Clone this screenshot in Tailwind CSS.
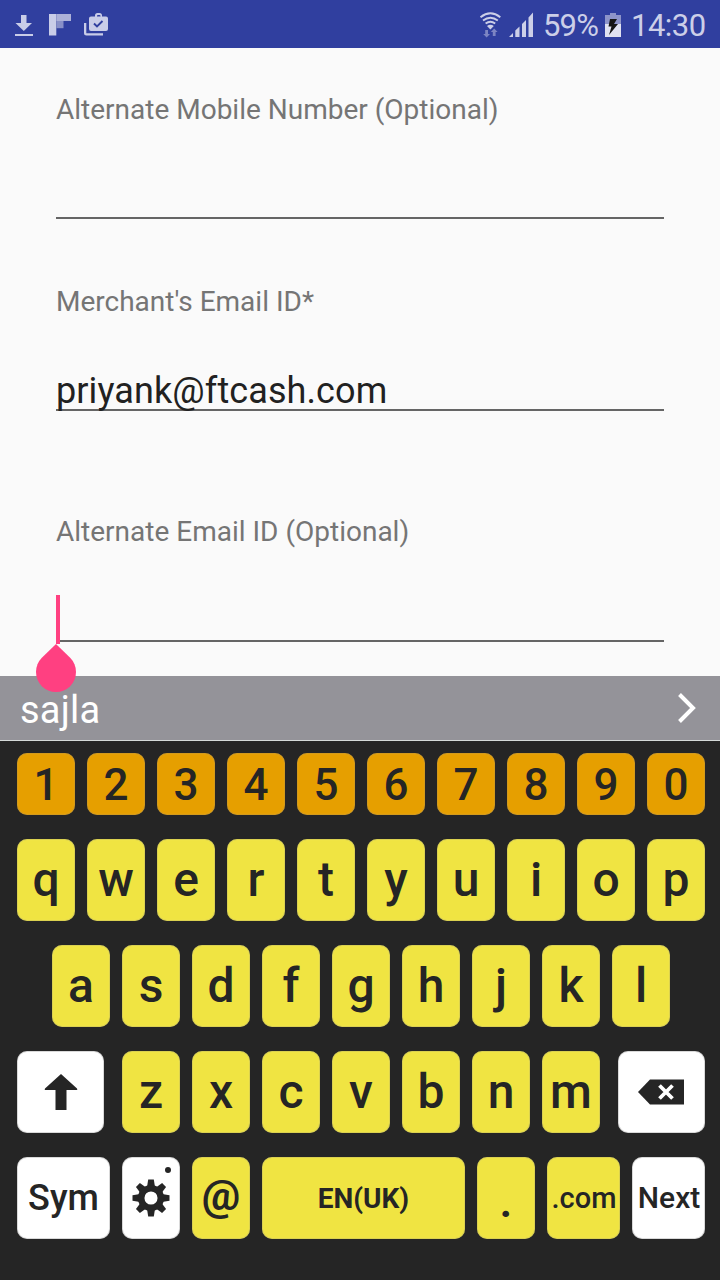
<!DOCTYPE html>
<html lang="en">
<head>
<meta charset="utf-8">
<title>Merchant details</title>
<script src="https://cdn.jsdelivr.net/npm/@tailwindcss/browser@4"></script>
</head>
<body class="w-[720px] h-[1280px] overflow-hidden bg-[#fafafa] font-['Roboto',sans-serif] flex flex-col">
<header class="h-12 shrink-0 bg-[#303f9f] flex items-center text-[#cccfe8]">
  <svg class="w-[120px] h-12" viewBox="0 0 120 48" fill="#c9cde8">
    <path d="M21 15h5.500v8h5.500l-8.200 8-8.300-8H21zM15 34h18v2H15z"/>
    <path d="M49 14h7.300v21.500H49z"/><path d="M56.300 14H71v7H56.300z" fill="#acb1d8"/><path d="M56.300 21h7.200v7.200h-7.200z" fill="#8890c8"/>
    <path d="M84 23h2.300v10.300H103v2.200H86.500a2.500 2.500 0 0 1-2.500-2.500z"/>
    <path fill-rule="evenodd" d="M91 16.500h4V15.500a2.500 2.500 0 0 1 2.500-2.500h2a2.500 2.500 0 0 1 2.500 2.500v1h4a2 2 0 0 1 2 2V29a2 2 0 0 1-2 2H91a2 2 0 0 1-2-2v-10.500a2 2 0 0 1 2-2zm6 0h3.500v-.500a1 1 0 0 0-1-1h-1.500a1 1 0 0 0-1 1z"/>
    <path d="m94 23.500 3 3 5.500-5.500" fill="none" stroke="#303f9f" stroke-width="1.900"/>
  </svg>
  <svg class="ml-[356px] w-[60px] h-12" viewBox="476 0 60 48" fill="#cccfe8">
    <g fill="none" stroke="#cccfe8" stroke-width="1.900"><path d="M480.500 17.200q9.900-7.800 19.800 0"/><path d="M483 20.500q7.400-5.600 14.800 0"/><path d="M485.600 23.500q4.800-3.600 9.600 0"/></g>
    <path d="M487 26q3.400-2.400 6.800 0l-3.400 3.500z"/>
    <path fill="#7d85c3" d="M485.200 30h2.800v4h2l-3.400 3.500-3.400-3.500h2zM492.800 36v-4h-2l3.400-3.500 3.400 3.500h-2v4z"/>
    <path d="M509 37l4-4v4zM515.300 30.500l4.200-4V37h-4.200zM522 24l4-4v17h-4zM528.500 17.500l4.500-5V37h-4.500z"/>
  </svg>
  <span class="ml-[7px] w-[56px] text-[31px] leading-8 tracking-[-0.8px] whitespace-nowrap mt-[3px]">59%</span>
  <svg class="ml-[5px] w-[18px] h-12" viewBox="604 0 18 48"><path fill="#8d94c9" d="M605 15h5v-2h6v2h5v9h-16z"/><path fill="#e0e2f1" d="M605 24h16v13h-16z"/><path fill="#151515" d="M610 19h7l-3 5h4l-9 11 2.500-8.500H608.500z"/></svg>
  <span class="ml-[9px] text-[31px] leading-8 tracking-[-0.5px] whitespace-nowrap mt-[3px]">14:30</span>
</header>

<main class="h-[628px] shrink-0 px-14 pt-[46px] text-[28px] text-[#757575]">
  <label class="block leading-8 h-[125px] border-b-2 border-[#656565] whitespace-nowrap">Alternate Mobile Number (Optional)</label>
  <label class="block leading-8 mt-[67px] whitespace-nowrap">Merchant's Email ID*</label>
  <div class="mt-[50px] h-[43px] border-b-2 border-[#656565] text-[36px] leading-[46px] tracking-[0.1px] text-[#212121] whitespace-nowrap">priyank@ftcash.com</div>
  <label class="block mt-[105px] leading-8 whitespace-nowrap">Alternate Email ID (Optional)</label>
  <div class="relative mt-[47px] h-[47px] border-b-2 border-[#656565]">
    <div class="absolute left-0 top-0 w-1 h-[49px] bg-[#ff4081]"></div>
    <svg class="absolute z-10 -left-5 top-[49px] w-10 h-12" viewBox="0 0 40 48" fill="#ff4081"><path d="M20 0 34.142 13.858A20 20 0 1 1 5.858 13.858Z"/></svg>
  </div>
</main>

<section class="h-[65px] shrink-0 bg-[#949399] border-b border-[#d5dad9] pl-5 pr-6 flex items-center justify-between text-white text-[38px]">
  <span class="leading-10 mt-1 tracking-[0.2px]">sajla</span>
  <svg class="w-[18px] h-[30px]" viewBox="0 0 18 30" fill="none" stroke="#fff" stroke-width="4"><path d="m1.500 1.500 13.500 13.500L1.500 28.500"/></svg>
</section>

<section class="flex-1 bg-[#252525] pt-3 px-[17px] flex flex-col gap-6 text-[#252525] font-medium text-[48px] leading-none pr-[15px]">
  <div class="flex gap-3 h-[62px] text-[44px]" data-keys="1234567890" data-tone="orange"></div>
  <div class="flex gap-3 h-[82px]" data-keys="qwertyuiop"></div>
  <div class="flex gap-3 h-[82px] pl-[35px]" data-keys="asdfghjkl"></div>
  <div class="flex gap-[18px] h-[82px]">
    <div class="w-[87px] rounded-[10px] bg-white inset-ring inset-ring-black/15 flex items-center justify-center"><svg class="w-[34px] h-9" viewBox="0 0 34 36" fill="#252525"><path d="M17 0 33 14.500q1 1.500-.500 1.500H22.500V36h-11V16h-10Q0 16 1 14.500z"/></svg></div>
    <div class="flex gap-3" data-keys="zxcvbnm"></div>
    <div class="w-[87px] rounded-[10px] bg-white inset-ring inset-ring-black/15 flex items-center justify-center pr-[2px]"><svg class="w-[46px] h-[26px]" viewBox="0 0 46 26"><path fill="#252525" d="M12 .500h34v25H12L0 13z"/><path d="m21.500 6.500 13 13m0-13-13 13" stroke="#fff" stroke-width="3.800"/></svg></div>
  </div>
  <div class="flex gap-3 h-[82px]">
    <div class="w-[93px] rounded-[10px] bg-white inset-ring inset-ring-black/15 flex items-center justify-center text-[36px]">Sym</div>
    <div class="relative w-[58px] rounded-[10px] bg-white inset-ring inset-ring-black/15 flex items-center justify-center">
      <svg class="w-[38px] h-[38px]" viewBox="-19 -19 38 38"><g id="gear" fill="#252525"></g><circle r="9.800" fill="none" stroke="#252525" stroke-width="6.500"/></svg>
      <i class="absolute right-[9px] top-[10px] w-[6px] h-[6px] rounded-full bg-[#252525]"></i>
    </div>
    <div class="w-[58px] rounded-[10px] bg-[#f0e442] inset-ring inset-ring-black/10 inset-shadow-[0_0_2px_#ffffff66] flex items-center justify-center text-[43px] font-bold pb-[5px]">@</div>
    <div class="w-[203px] rounded-[10px] bg-[#f0e442] inset-ring inset-ring-black/10 inset-shadow-[0_0_2px_#ffffff66] flex items-center justify-center text-[28px] font-bold pt-[2px]">EN(UK)</div>
    <div class="w-[58px] rounded-[10px] bg-[#f0e442] inset-ring inset-ring-black/10 inset-shadow-[0_0_2px_#ffffff66] flex items-center justify-center pt-[6px]">.</div>
    <div class="w-[73px] rounded-[10px] bg-[#f0e442] inset-ring inset-ring-black/10 inset-shadow-[0_0_2px_#ffffff66] flex items-center justify-center text-[29px] pl-px">.com</div>
    <div class="w-[73px] rounded-[10px] bg-white inset-ring inset-ring-black/15 flex items-center justify-center text-[30px] pl-px">Next</div>
  </div>
</section>
<script>
document.querySelectorAll('[data-keys]').forEach(row => {
  const tone = row.dataset.tone === 'orange' ? 'bg-[#e69f00] pt-px' : 'bg-[#f0e442]';
  row.innerHTML = [...row.dataset.keys].map(k => `<div class="w-[58px] shrink-0 rounded-[10px] inset-ring inset-ring-black/10 inset-shadow-[0_0_2px_#ffffff66] flex items-center justify-center ${tone}">${k}</div>`).join('');
});
document.getElementById('gear').innerHTML = [0,45,90,135,180,225,270,315].map(a => `<path transform="rotate(${a})" d="M-2.800-18.500h5.600L4-11h-8z"/>`).join('');
</script>
</body>
</html>
